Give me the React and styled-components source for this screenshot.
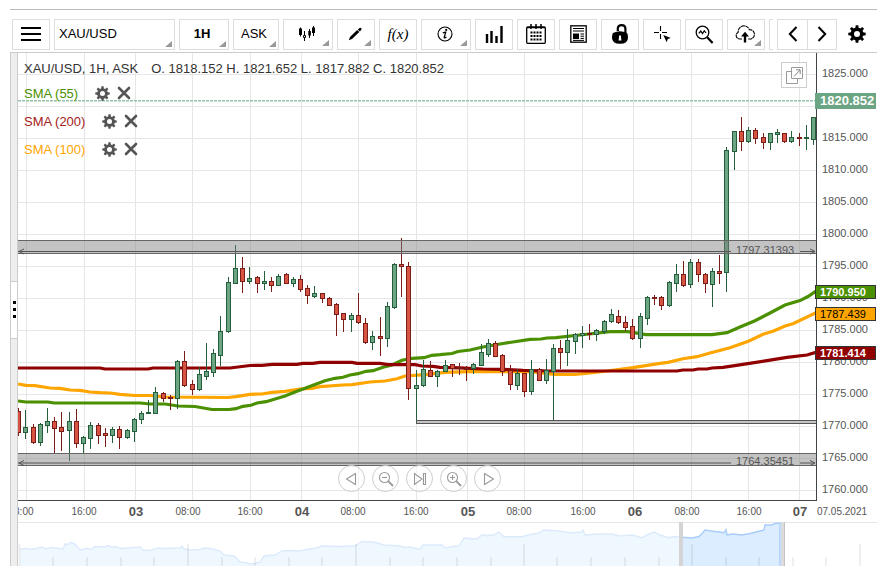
import { useState } from "react";
import styled, { createGlobalStyle } from "styled-components";

const GlobalStyle = createGlobalStyle`
  * {
    box-sizing: border-box;
  }
  body {
    margin: 0;
    background-color: white;
    font-family: "Liberation Sans", Arial, sans-serif;
    font-size: 13px;
    color: black;
  }
  button, select {
    font: inherit;
    color: inherit;
    margin: 0;
    padding: 0;
    cursor: pointer;
  }
`;

const Wrap = styled.main`
  margin: 9px 7px 6px 10px;
  border-top: 1px solid #bbb;
`;
const Toolbar = styled.div`
  display: flex;
  align-items: center;
  height: 42px;
  padding: 8px 0 2px 2px;
`;
const ToolStrip = styled.div`
  display: flex;
  gap: 4px;
  flex: 1;
  min-width: 0;
  overflow: hidden;
`;
const corner = `
  &::after {
    content: "";
    position: absolute;
    right: 3px;
    bottom: 3px;
    border-left: 7px solid transparent;
    border-bottom: 6px solid #999;
    pointer-events: none;
  }
`;
const ToolBtn = styled.button`
  position: relative;
  display: flex;
  flex: none;
  align-items: center;
  justify-content: center;
  width: ${(props) => props.$width || 38}px;
  height: 31px;
  background-color: white;
  border: 1px solid #ddd;
  padding-right: ${(props) => (props.$menu ? 3 : 0)}px;
  ${(props) => props.$menu && corner}
`;
const PickBox = styled.label`
  position: relative;
  flex: none;
  width: ${(props) => props.$width}px;
  height: 31px;
  ${corner}
`;
const Pick = styled.select`
  appearance: none;
  width: 100%;
  height: 31px;
  padding: 0 8px 2px 4px;
  background-color: white;
  border: 1px solid #ddd;
  border-radius: 0;
  font-weight: ${(props) => (props.$bold ? 700 : 400)};
  text-align: ${(props) => props.$align || "center"};
  text-align-last: ${(props) => props.$align || "center"};
`;
const Pager = styled.div`
  display: flex;
  margin-left: 4px;
  & button + button {
    margin-left: -1px;
  }
`;
const PlainBtn = styled.button`
  display: flex;
  align-items: center;
  justify-content: center;
  width: ${(props) => props.$width}px;
  height: ${(props) => props.$height}px;
  background: none;
  border: none;
`;
const Body = styled.div`
  display: flex;
  border-top: 1px solid #ccc;
`;
const Gutter = styled.div`
  display: flex;
  flex-direction: column;
  justify-content: center;
  flex: none;
  width: 8px;
  background-color: #eee;
  border-left: 1px solid #ccc;
  border-right: 1px solid #ccc;
`;
const GutterHandle = styled.button`
  display: flex;
  flex-direction: column;
  align-items: center;
  justify-content: center;
  gap: 4px;
  width: 6px;
  height: 58px;
  background-color: white;
  border: solid #ccc;
  border-width: 1px 0;
`;
const Dot = styled.span`
  width: 3px;
  height: 3px;
  background-color: black;
`;
const ChartArea = styled.div`
  position: relative;
  flex: 1;
  min-width: 0;
`;
const Drawing = styled.svg`
  display: block;
  width: 100%;
  height: auto;
`;
const Legend = styled.div`
  position: absolute;
  top: 8px;
  left: 6px;
`;
const Quote = styled.div`
  display: flex;
  gap: 13px;
  line-height: 16px;
  margin-bottom: 2px;
  color: #333;
`;
const Study = styled.div`
  display: flex;
  align-items: center;
  height: 28px;
  color: ${(props) => props.color};
`;
const StudyTools = styled.div`
  display: flex;
  gap: 6px;
  margin-left: 16px;
`;
const PopOut = styled.button`
  position: absolute;
  top: 9px;
  right: 70px;
  display: flex;
  align-items: center;
  justify-content: center;
  width: 26px;
  height: 26px;
  background-color: rgba(255, 255, 255, 0.6);
  border: 1px solid #ccc;
`;
const Controls = styled.div`
  position: absolute;
  left: 0;
  right: 56px;
  bottom: 74px;
  display: flex;
  justify-content: center;
  gap: 7px;
`;
const RoundBtn = styled.button`
  display: flex;
  align-items: center;
  justify-content: center;
  width: 27px;
  height: 27px;
  border: 1px solid #ccc;
  border-radius: 50%;
  background-color: rgba(255, 255, 255, 0.5);
`;

// [high, body top, body bottom, low, rising]
const candles = [
  [408, 411, 433, 436, 0], [410, 427, 433, 439, 1], [424, 427, 443, 444, 0], [423, 424, 443, 446, 1],
  [408, 421, 426, 433, 1], [417, 421, 429, 453, 0], [412, 427, 432, 451, 0], [412, 421, 431, 461, 1],
  [409, 421, 444, 448, 0], [436, 437, 444, 453, 1], [422, 425, 439, 449, 1], [423, 425, 436, 444, 0],
  [428, 433, 436, 447, 0], [427, 429, 436, 443, 1], [426, 429, 438, 449, 0], [429, 430, 438, 439, 1],
  [418, 419, 432, 442, 1], [411, 413, 420, 424, 1], [400, 412, 414, 414, 1], [387, 392, 414, 414, 1],
  [392, 393, 399, 402, 0], [395, 397, 399, 410, 0], [360, 361, 399, 409, 1], [351, 361, 386, 387, 0],
  [380, 384, 390, 395, 0], [367, 374, 390, 391, 1], [343, 371, 377, 380, 1], [349, 353, 373, 377, 1],
  [316, 331, 356, 366, 1], [277, 282, 332, 333, 1], [245, 268, 284, 284, 1], [257, 268, 282, 293, 0],
  [267, 278, 282, 284, 1], [276, 277, 284, 293, 0], [271, 281, 284, 290, 1], [277, 281, 286, 292, 0],
  [274, 276, 286, 286, 1], [273, 274, 284, 284, 0], [277, 279, 284, 287, 1], [275, 279, 290, 292, 0],
  [285, 288, 296, 304, 0], [286, 293, 297, 298, 1], [293, 293, 299, 303, 0], [297, 298, 306, 306, 0],
  [303, 304, 315, 336, 0], [313, 313, 320, 332, 0], [313, 315, 320, 332, 1], [293, 315, 323, 324, 0],
  [318, 323, 343, 344, 0], [331, 336, 343, 350, 1], [317, 336, 339, 356, 0], [302, 306, 339, 347, 1],
  [263, 264, 308, 309, 1], [238, 264, 267, 297, 0], [262, 266, 389, 400, 0], [370, 385, 389, 420, 1],
  [360, 369, 386, 387, 1], [361, 370, 377, 377, 0], [370, 371, 377, 387, 1], [360, 365, 372, 372, 1],
  [364, 364, 369, 377, 0], [363, 367, 369, 375, 0], [366, 368, 370, 381, 0], [363, 364, 369, 374, 1],
  [344, 352, 366, 366, 1], [339, 343, 355, 357, 1], [341, 343, 357, 357, 0], [354, 355, 372, 376, 0],
  [365, 370, 385, 390, 0], [369, 373, 386, 390, 1], [373, 373, 392, 397, 0], [360, 369, 392, 395, 1],
  [368, 369, 381, 381, 0], [359, 370, 381, 384, 1], [344, 348, 372, 423, 1], [340, 348, 353, 369, 0],
  [329, 340, 353, 366, 1], [333, 334, 342, 354, 1], [326, 333, 336, 348, 1], [324, 333, 335, 340, 0],
  [329, 330, 335, 341, 1], [320, 321, 332, 334, 1], [309, 314, 322, 323, 1], [310, 316, 323, 324, 0],
  [316, 322, 328, 331, 0], [319, 326, 339, 340, 0], [313, 316, 339, 348, 1], [296, 297, 319, 325, 1],
  [295, 297, 299, 305, 0], [296, 297, 306, 310, 0], [281, 282, 306, 307, 1], [264, 274, 284, 292, 1],
  [261, 274, 286, 287, 0], [259, 262, 285, 288, 1], [259, 262, 275, 282, 0], [273, 274, 284, 293, 0],
  [268, 271, 285, 307, 1], [255, 271, 274, 284, 0], [147, 150, 273, 292, 1], [131, 131, 152, 170, 1],
  [117, 131, 142, 151, 0], [127, 130, 142, 143, 1], [128, 130, 139, 144, 0], [133, 137, 143, 149, 0],
  [133, 133, 143, 150, 1], [129, 132, 135, 143, 1], [133, 133, 142, 143, 0], [131, 137, 142, 143, 1],
  [133, 137, 139, 146, 0], [125, 137, 139, 150, 1], [117, 117, 140, 145, 1],
];
const candleX = (index) => Math.floor(18.6 + index * 7.228);

const averages = [
  {
    color: "#ffa500",
    points:
      "18,384 26,385.3 35,385.7 50,388 60,388.3 70,390 80,390.3 90,392 100,392.7 110,393 120,394.3 135,395.5 150,395.5 165,397 228,397.5 236,396.7 250,394.3 262,394 272,392.3 285,391.3 300,389 312,388.3 320,386.7 343,385 352,384.7 370,382 385,381 397,378.7 405,376 425,374.6 445,372.3 475,371.3 530,371.7 548,373.7 555,374.5 575,374.5 590,373 607,371 633,367.7 660,363.3 668,362.3 683,358.7 697,356.7 710,353 730,347.7 749,341 763,334.3 773,331.3 785,326 793,323.7 816,312.7",
  },
  {
    color: "#4a9000",
    points:
      "18,401 26,402 48,402 54,403 140,403 150,404 165,404 178,406 195,406.5 212,409.5 229,409.5 236,408.7 243,406.3 251,405.3 257,403 266,401.7 285,396 295,392 309,386.7 325,380.7 335,378.3 343,377.3 350,375 358,373.7 366,371.3 373,370.7 383,367.3 392,365 402,360.3 412,358.3 424,357.7 432,355.3 440,354.7 452,353.5 458,351.5 470,350 483,347 500,344 530,339.3 541,339 547,338 556,337.7 580,335 610,331.7 628,331.7 646,334.7 712,334.7 727,332.7 740,327 755,320.7 770,313 785,305 800,300.6 808,296.5 816,291",
  },
  {
    color: "#900000",
    points:
      "18,368 100,368 105,369 148,369 153,368 230,368 250,365.5 262,365.3 272,364.3 297,364.3 303,363.3 313,363.3 320,362.4 352,362.4 357,363.4 380,363.4 388,364.6 415,364.6 422,366 433,366.3 440,367.4 460,367.8 483,369 503,369.3 523,370.3 550,371 677,371 683,370 693,370 698,369 707,369 712,368 723,367.3 743,364.3 767,360.7 787,357.3 807,355 816,352.3",
  },
];

const gridX = [26.5, 84.5, 135.5, 192.5, 250.5, 301.5, 358.5, 416.5, 467.5, 524.5, 582.5, 633.5, 691.5, 748.5, 799.5];
const hours = [
  ["08:00", 21], ["16:00", 84], ["08:00", 188], ["16:00", 250], ["08:00", 353], ["16:00", 416],
  ["08:00", 519], ["16:00", 583], ["08:00", 687], ["16:00", 749],
];
const days = [["03", 136], ["04", 302], ["05", 468], ["06", 635], ["07", 800]];
const prices = [1825, 1820, 1815, 1810, 1805, 1800, 1795, 1790, 1785, 1780, 1775, 1770, 1765, 1760];
const priceY = (price) => 74.5 + (1825 - price) * 6.4;

const tags = [
  { value: "1790.950", y: 286, fill: "#4a9000", text: "white", weight: 700 },
  { value: "1787.439", y: 308, fill: "#ffa500", text: "black", weight: 400 },
  { value: "1781.414", y: 347, fill: "#900000", text: "white", weight: 700 },
];
const studies = [
  { name: "SMA (55)", color: "#4a9000" },
  { name: "SMA (200)", color: "#a52020" },
  { name: "SMA (100)", color: "#ffa500" },
];

const historyLine =
  "20,549 27,548.5 32,549.5 42,547 45,549 52,547.5 63,549 65,544 68,544.3 71,542.5 75,544 79,549 82,550 87,548.3 91,549.5 95,546.5 105,547 108,545.5 111,547 115,546.5 121,548.5 140,547 143,550 150,550.5 158,548 165,548.5 180,548 182,546 184,549 190,550 200,549.5 205,548 213,549 220,551 224,555 234,556 240,562 245,562.5 250,564 255,563.5 260,562 264,556 268,555.5 275,555 282,551 291,550.5 299,551 310,549 316,548 322,546 340,546.5 355,546 362,541.5 373,542 379,543.5 384,545 400,546 405,547.5 410,547 418,549 420,549 423,545 442,545 444,547 447,548 452,546.5 459,546 464,538 477,539 482,534.7 486,535.5 494,535 499,532 504,536.7 522,536.7 530,534.5 539,533 544,530 559,531 570,532.7 582,532 583,530 585,535 597,534 612,534 620,536 632,535 642,537.7 648,534.5 654,532 660,535 669,537.7 674,536.5 682,537.3";
const recentLine =
  "682,537.3 692,538 699,536.5 702,533.5 705,530 715,531.5 724,532.7 726,529.7 727,535 733,534 742,535 750,533.5 758,531.5 764,530 765,525 772,525 775,523.5 780,523";
const tallTicks = [19.5, 188, 356, 524, 692, 860];
const shortTicks = [53, 87, 121, 154, 222, 255, 289, 322, 390, 423, 457, 491, 557, 591, 625, 659, 726, 759, 793, 826];

const GearIcon = ({ size, color }) => (
  <svg width={size} height={size} viewBox="0 0 18 18">
    <g fill={color}>
      {[0, 45, 90, 135].map((deg) => (
        <path key={deg} transform={`rotate(${deg} 9 9)`} d="M7.3 3.5 7.7 0.3h2.6l.4 3.2zM7.3 14.5l.4 3.2h2.6l.4-3.2z" />
      ))}
    </g>
    <circle cx="9" cy="9" r="4.7" fill="none" stroke={color} strokeWidth="3.4" />
  </svg>
);
const CloseIcon = () => (
  <svg width="16" height="16" viewBox="0 0 16 16">
    <path d="M3 3 13 13M13 3 3 13" stroke="#555" strokeWidth="2.6" strokeLinecap="round" />
  </svg>
);
const MenuIcon = () => (
  <svg width="20" height="14" viewBox="0 0 20 14">
    <path d="M0 1h20M0 7h20M0 13h20" stroke="black" strokeWidth="2" />
  </svg>
);
const CandleIcon = () => (
  <svg width="18" height="16" viewBox="0 0 18 16">
    <path d="M2.5 1.5v9M6.5 5v10M11.5 3v9M15.5 0v10" stroke="black" strokeWidth="1" />
    <path d="M1 2.5h3v6.5H1zM10.3 5h2.6v4.5h-2.6zM14 1.5h3v5.5h-3z" />
    <path d="M5.5 9.5h2v2h-2z" fill="white" stroke="black" strokeWidth="1" />
  </svg>
);
const PenIcon = () => (
  <svg width="14" height="14" viewBox="0 0 14 14">
    <path d="M.8 13.2 2 10 9.2 3 11.3 5 4 12z" />
    <path d="M9.8 2.6 11.6.9q1.1-.4 1.7.3.5.8 0 1.5L11.8 4.4z" />
  </svg>
);
const FnIcon = styled.span`
  font-family: "Liberation Serif", "Times New Roman", serif;
  font-size: 15px;
  font-style: italic;
`;
const InfoIcon = () => (
  <svg width="16" height="16" viewBox="0 0 16 16">
    <circle cx="8" cy="8" r="7" fill="none" stroke="black" strokeWidth="1.1" />
    <circle cx="9.2" cy="3.9" r="1.1" />
    <path d="M5.8 6.9Q7.4 6.3 8.7 6.2L7.2 11.4Q7.1 12.6 9.4 10.9" fill="none" stroke="black" strokeWidth="1.3" />
  </svg>
);
const VolumeIcon = () => (
  <svg width="18" height="17" viewBox="0 0 18 17">
    <path d="M2 8v9M6.5 5v12M11.5 10v7M16.5 0v17" stroke="black" strokeWidth="2.4" />
  </svg>
);
const CalendarIcon = () => (
  <svg width="20" height="20" viewBox="0 0 20 20">
    <rect x=".7" y="3" width="18.6" height="16.3" rx="1" fill="none" stroke="black" strokeWidth="1.3" />
    <path d="M5 0v5M10 0v5M15 0v5" stroke="black" strokeWidth="1.5" />
    <path d="M1 3.6h18" stroke="black" strokeWidth="1.2" />
    <path d="M4.5 8.5h12M4.5 12h12M4.5 15.5h12" stroke="black" strokeWidth="1.8" strokeDasharray="2 1" />
  </svg>
);
const NewsIcon = () => (
  <svg width="17" height="18" viewBox="0 0 17 18">
    <rect x=".8" y=".8" width="15.4" height="16.4" fill="white" stroke="#111" strokeWidth="1.4" />
    <path d="M3 3.5h11M3 6h11" stroke="black" strokeWidth="1.2" />
    <rect x="3" y="8.5" width="6" height="5.5" />
    <path d="M10.5 9h3.5M10.5 11.2h3.5M10.5 13.4h3.5M3 15.4h11" stroke="black" />
  </svg>
);
const LockIcon = () => (
  <svg width="16" height="20" viewBox="0 0 16 20">
    <path d="M5.8 7V4.2Q6.2 1.2 9.6 1.2 13.2 1.2 13.4 4.5V10" fill="none" stroke="black" strokeWidth="2.2" />
    <path d="M1 9q7-3.5 14 0 1 1 1 4.5 0 6.3-8 6.3t-8-6.3Q0 10 1 9z" />
    <path d="M7 12q1-1.3 2 0v1.6l.5 3h-3l.5-3z" fill="white" />
  </svg>
);
const CrosshairIcon = () => (
  <svg width="17" height="17" viewBox="0 0 17 17">
    <path d="M0 6.5h5M8 6.5h5M6.5 0v5M6.5 8v5" stroke="black" strokeWidth="1.1" />
    <path d="M9.3 9 16.8 12 13.8 13 12.6 16.2z" />
  </svg>
);
const AnalyzeIcon = () => (
  <svg width="19" height="19" viewBox="0 0 19 19">
    <circle cx="7.5" cy="7.5" r="6.3" fill="none" stroke="black" strokeWidth="1.3" />
    <path d="M3.8 8.3 5.8 6 7.5 8.6 9.3 5.7 11 8" fill="none" stroke="black" strokeWidth="1.2" />
    <path d="M12.2 12.2 17.6 18" stroke="black" strokeWidth="2.2" />
  </svg>
);
const CloudIcon = () => (
  <svg width="20" height="18" viewBox="0 0 20 18">
    <path
      d="M7 14H4.4A3.6 3.6 0 0 1 3.2 7.2 5.8 5.8 0 0 1 14.4 4.6 4.8 4.8 0 0 1 16 14H13.2"
      fill="none"
      stroke="black"
      strokeWidth="1.1"
      strokeDasharray="4 0.5"
    />
    <path d="M10 6.8 14 11.5H11.2V17.5H8.8V11.5H6z" />
  </svg>
);
const ChevronIcon = ({ d }) => (
  <svg width="10" height="16" viewBox="0 0 10 16">
    <path d={d} fill="none" stroke="black" strokeWidth="2" />
  </svg>
);
const PopOutIcon = () => (
  <svg width="17" height="17" viewBox="0 0 17 17">
    <path d="M5.5.5h11v11h-11zM5 4.5H.5v12h11V12" fill="none" stroke="#999" />
    <path d="M8 9.5 14 3M10 2.8h4.2V7" fill="none" stroke="#888" />
  </svg>
);
const ControlIcon = ({ children }) => (
  <svg width="16" height="16" viewBox="0 0 16 16" fill="none" stroke="#999" strokeWidth="1.1">
    {children}
  </svg>
);

const Candle = ({ index, data }) => {
  const [high, top, bottom, low, up] = data;
  const x = candleX(index);
  return (
    <g stroke={up ? "#255e3b" : "#7a1d18"}>
      <path d={`M${x + 0.5} ${high}V${low}`} />
      <rect
        x={x - 1.5}
        y={top + 0.5}
        width="4"
        height={Math.max(bottom - top - 1, 1)}
        fill={up ? "#6ba583" : "#d75442"}
      />
    </g>
  );
};

// price zone with its arrowed level line and label
const Band = ({ top, height, line, label }) => (
  <g>
    <rect x="18" y={top} width="798" height={height} fill="#808080" fillOpacity="0.47" />
    <path d={`M18 ${top + 0.5}H816M18 ${top + height - 0.5}H816`} stroke="#666" />
    <path
      d={`M18 ${line}H731M800 ${line}H815M24 ${line - 2.5}L19 ${line}L24 ${line + 2.5}M810 ${line - 2.5}L815 ${line}L810 ${line + 2.5}`}
      fill="none"
      stroke="#555"
    />
    <text x="736" y={line + 2} fontSize="11" fill="#555">
      {label}
    </text>
  </g>
);

const PriceChart = () => (
  <Drawing viewBox="18 53 859 469" role="img" aria-label="XAU/USD price chart">
    <defs>
      <clipPath id="plot">
        <rect x="18" y="53" width="798" height="447" />
      </clipPath>
      <clipPath id="timeAxis">
        <rect x="18" y="501" width="859" height="21" />
      </clipPath>
    </defs>
    <g clipPath="url(#plot)">
      <g stroke="#e6e6e6">
        {gridX.map((x) => (
          <path key={x} d={`M${x} 53V500`} />
        ))}
        {prices.map((price) => (
          <path key={price} d={`M18 ${Math.floor(priceY(price)) + 0.5}H816`} />
        ))}
      </g>
      <path d="M18 100.7H816" stroke="#96c2aa" strokeWidth="1.4" strokeDasharray="3 1" />
      {averages.map((line) => (
        <polyline key={line.color} points={line.points} fill="none" stroke={line.color} strokeWidth="3.2" />
      ))}
      {candles.map((data, i) => (
        <Candle key={i} index={i} data={data} />
      ))}
      <rect x="416" y="420" width="400" height="3" fill="#c4c4c4" />
      <path d="M416 420.5H816M416.5 420V424M416 423.5H816" stroke="#555" />
      <Band top={240} height={14} line={251.5} label="1797.31393" />
      <Band top={453} height={13} line={463} label="1764.35451" />
    </g>
    <path d="M816.5 53V500.5M18 500.5H817" stroke="#444" />
    <g fontSize="11" fill="#555">
      {prices
        .filter((price) => price !== 1820)
        .map((price) => (
          <text key={price} x="822" y={Math.round(priceY(price)) + 2}>
            {price}.000
          </text>
        ))}
    </g>
    <rect x="815" y="93" width="61" height="16" fill="#6ba583" />
    <text x="820" y="105" fontSize="13" fontWeight="700" fill="white">
      1820.852
    </text>
    {tags.map((tag) => (
      <g key={tag.value}>
        <rect x="815.5" y={tag.y - 0.5} width="60" height="13" fill={tag.fill} stroke="#333" />
        <text x="820" y={tag.y + 10} fontSize="11" fontWeight={tag.weight} fill={tag.text}>
          {tag.value}
        </text>
      </g>
    ))}
    <g clipPath="url(#timeAxis)" fill="#555" textAnchor="middle">
      {hours.map(([label, x]) => (
        <text key={x} x={x} y="515" fontSize="10">
          {label}
        </text>
      ))}
      {days.map(([label, x]) => (
        <text key={x} x={x} y="516" fontSize="13" fontWeight="700">
          {label}
        </text>
      ))}
      <text x="842" y="515" fontSize="10">
        07.05.2021
      </text>
    </g>
  </Drawing>
);

const Navigator = () => (
  <Drawing viewBox="18 522 859 44" role="img" aria-label="Price history">
    <path d="M18 522.5H877" stroke="#e6e6e6" />
    <polygon points={`20,566 ${historyLine} 682,566`} fill="#eff7ff" />
    <polyline points={historyLine} fill="none" stroke="#dcebfb" strokeWidth="1.4" />
    <polygon points={`682,566 ${recentLine} 780,566`} fill="#dcedff" />
    <polyline points={`${recentLine} 780,566`} fill="none" stroke="#a9cdfa" strokeWidth="1.4" />
    <g stroke="#000" strokeOpacity="0.08" strokeWidth="1.6">
      {tallTicks.map((x) => (
        <path key={x} d={`M${x} 544V566`} />
      ))}
      {shortTicks.map((x) => (
        <path key={x} d={`M${x} 557V566`} />
      ))}
    </g>
    <rect x="679" y="522" width="4" height="44" fill="#d4d4d4" />
    <rect x="781" y="522" width="4" height="44" fill="#dcdcdc" />
    <path d="M784.5 522V566" stroke="#c4c4c4" />
  </Drawing>
);

const tools = [
  { name: "Chart type", width: 50, menu: true, icon: <CandleIcon /> },
  { name: "Drawing", width: 38, menu: true, icon: <PenIcon /> },
  { name: "Indicators", width: 38, icon: <FnIcon>f(x)</FnIcon> },
  { name: "Information", width: 50, menu: true, icon: <InfoIcon /> },
  { name: "Volume", icon: <VolumeIcon /> },
  { name: "Calendar", icon: <CalendarIcon /> },
  { name: "News", icon: <NewsIcon /> },
  { name: "Lock", icon: <LockIcon /> },
  { name: "Crosshair", icon: <CrosshairIcon /> },
  { name: "Analyze", icon: <AnalyzeIcon /> },
  { name: "Save", menu: true, icon: <CloudIcon /> },
  { name: "More", icon: null },
];

const App = () => {
  const [symbol, setSymbol] = useState("XAU/USD");
  const [period, setPeriod] = useState("1H");
  const [side, setSide] = useState("ASK");
  return (
    <Wrap>
      <GlobalStyle />
      <Toolbar>
        <ToolStrip>
          <ToolBtn aria-label="Menu">
            <MenuIcon />
          </ToolBtn>
          <PickBox $width={121}>
            <Pick aria-label="Symbol" $align="left" value={symbol} onChange={(e) => setSymbol(e.target.value)}>
              <option>XAU/USD</option>
            </Pick>
          </PickBox>
          <PickBox $width={50}>
            <Pick aria-label="Period" $bold value={period} onChange={(e) => setPeriod(e.target.value)}>
              <option>1H</option>
            </Pick>
          </PickBox>
          <PickBox $width={46}>
            <Pick aria-label="Side" value={side} onChange={(e) => setSide(e.target.value)}>
              <option>ASK</option>
            </Pick>
          </PickBox>
          {tools.map((tool) => (
            <ToolBtn key={tool.name} aria-label={tool.name} $width={tool.width} $menu={tool.menu}>
              {tool.icon}
            </ToolBtn>
          ))}
        </ToolStrip>
        <Pager>
          <ToolBtn aria-label="Previous" $width={31}>
            <ChevronIcon d="M8.5 1 1.8 8 8.5 15" />
          </ToolBtn>
          <ToolBtn aria-label="Next" $width={30}>
            <ChevronIcon d="M1.5 1 8.2 8 1.5 15" />
          </ToolBtn>
        </Pager>
        <PlainBtn aria-label="Settings" $width={40} $height={31}>
          <GearIcon size={18} color="black" />
        </PlainBtn>
      </Toolbar>
      <Body>
        <Gutter>
          <GutterHandle aria-label="Toggle panel">
            <Dot />
            <Dot />
            <Dot />
          </GutterHandle>
        </Gutter>
        <ChartArea>
          <PriceChart />
          <Navigator />
          <Legend>
            <Quote>
              <span>XAU/USD, 1H, ASK</span>
              <span>O. 1818.152 H. 1821.652 L. 1817.882 C. 1820.852</span>
            </Quote>
            {studies.map((study) => (
              <Study key={study.name} color={study.color}>
                {study.name}
                <StudyTools>
                  <PlainBtn aria-label={`${study.name} settings`} $width={16} $height={16}>
                    <GearIcon size={15} color="#555" />
                  </PlainBtn>
                  <PlainBtn aria-label={`Remove ${study.name}`} $width={16} $height={16}>
                    <CloseIcon />
                  </PlainBtn>
                </StudyTools>
              </Study>
            ))}
          </Legend>
          <PopOut aria-label="Open in new window">
            <PopOutIcon />
          </PopOut>
          <Controls>
            <RoundBtn aria-label="Scroll left">
              <ControlIcon>
                <path d="M11.5 2.5v11L2.5 8z" />
              </ControlIcon>
            </RoundBtn>
            <RoundBtn aria-label="Zoom out">
              <ControlIcon>
                <circle cx="6.5" cy="6.5" r="5" />
                <path d="M4 6.5h5" />
                <path d="M10.2 10.2 15 15" strokeWidth="1.8" />
              </ControlIcon>
            </RoundBtn>
            <RoundBtn aria-label="Jump to latest">
              <ControlIcon>
                <path d="M2.5 2.5v11L10 8zM11.5 2.5h2v11h-2z" />
              </ControlIcon>
            </RoundBtn>
            <RoundBtn aria-label="Zoom in">
              <ControlIcon>
                <circle cx="6.5" cy="6.5" r="5" />
                <path d="M4 6.5h5M6.5 4v5" />
                <path d="M10.2 10.2 15 15" strokeWidth="1.8" />
              </ControlIcon>
            </RoundBtn>
            <RoundBtn aria-label="Scroll right">
              <ControlIcon>
                <path d="M4.5 2.5v11L13.5 8z" />
              </ControlIcon>
            </RoundBtn>
          </Controls>
        </ChartArea>
      </Body>
    </Wrap>
  );
};

export default App;
